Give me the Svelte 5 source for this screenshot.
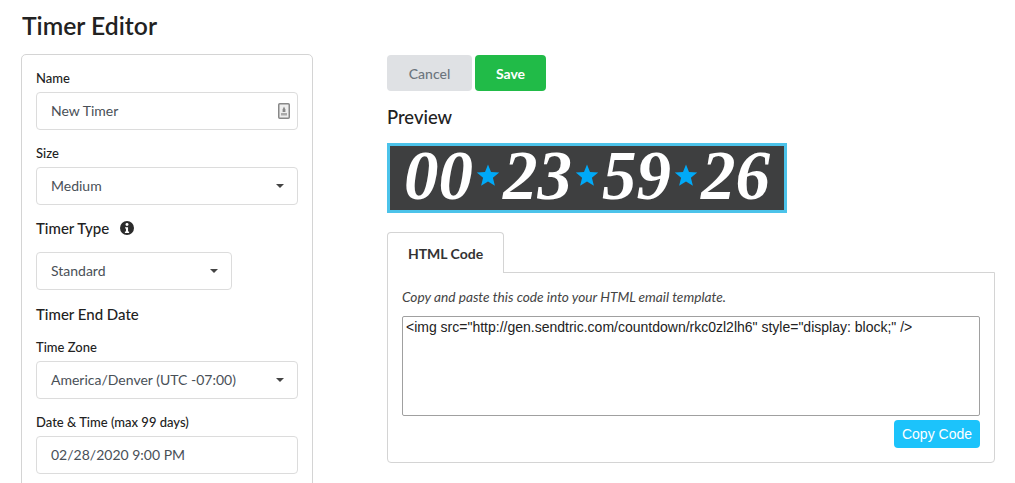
<script>
  const segments = ['00', '23', '59', '26'];
  const code = '<img src="http://gen.sendtric.com/countdown/rkc0zl2lh6" style="display: block;" />';
</script>

<div class="page">
  <div class="left">
    <h1>Timer Editor</h1>
    <div class="card">
      <div class="label first">Name</div>
      <div class="field">
        <span>New Timer</span>
        <svg class="contact" width="12" height="16" viewBox="0 0 12 16">
          <rect x="0.75" y="0.75" width="10.5" height="14.5" rx="1" fill="#eee" stroke="#888" stroke-width="1.5" />
          <path d="M6 3.500l1.400 3v2.500H4.600V6.500z" fill="#888" />
          <rect x="3" y="10" width="6" height="2.500" fill="#aaa" />
        </svg>
      </div>

      <div class="label">Size</div>
      <div class="field"><span>Medium</span><i class="caret"></i></div>

      <div class="heading type">
        Timer Type
        <svg width="14" height="14" viewBox="0 0 16 16">
          <circle cx="8" cy="8" r="8" fill="#2b2b2b" />
          <circle cx="8" cy="4" r="1.700" fill="#fff" />
          <path d="M5.800 7h3.400v5h1.200v1.600H5.600V12h1.200V8.600h-1z" fill="#fff" />
        </svg>
      </div>
      <div class="field short"><span>Standard</span><i class="caret"></i></div>

      <div class="heading end">Timer End Date</div>

      <div class="label zone">Time Zone</div>
      <div class="field"><span>America/Denver (UTC -07:00)</span><i class="caret"></i></div>

      <div class="label">Date &amp; Time (max 99 days)</div>
      <div class="field"><span>02/28/2020 9:00 PM</span></div>
    </div>
  </div>

  <div class="right">
    <div class="actions">
      <button class="cancel">Cancel</button>
      <button class="save">Save</button>
    </div>
    <h2>Preview</h2>
    <div class="timer">
      {#each segments as seg, i}
        {#if i > 0}
          <svg class="star" width="24" height="24" viewBox="0 0 24 24">
            <path d="M12 1.500l3 7.600 8.200.5-6.300 5.200 2 8-6.900-4.400-6.900 4.400 2-8L.8 9.600 9 9.100z" fill="#00a9f7" />
          </svg>
        {/if}
        <span class="digits">{seg}</span>
      {/each}
    </div>

    <div class="tab">HTML Code</div>
    <div class="panel">
      <p>Copy and paste this code into your HTML email template.</p>
      <div class="code">{code}</div>
      <div class="copy-row">
        <button class="copy">Copy Code</button>
      </div>
    </div>
  </div>
</div>

<style>
  :global(body) {
    background: #fff;
    overflow: hidden;
  }

  .page {
    display: flex;
    height: 483px;
    overflow: hidden;
    padding-left: 21px;
    box-sizing: border-box;
    font-family: Lato, "Liberation Sans", sans-serif;
    color: #212529;
  }

  .left {
    width: 292px;
    flex: none;
  }

  h1 {
    margin: 0;
    height: 54px;
    padding: 11px 0 0 1px;
    box-sizing: border-box;
    font-size: 24.700px;
    line-height: 30px;
    font-weight: 600;
    color: #222;
  }

  .card {
    border: 1px solid #d4d4d4;
    border-radius: 5px;
    padding: 14px 14px 30px;
    height: 460px;
    box-sizing: border-box;
  }

  .label {
    font-size: 13px;
    line-height: 16px;
    font-weight: 500;
    margin: 15px 0 6px;
    color: #222;
  }

  .label.first {
    margin-top: 1px;
  }

  .label.zone {
    margin-top: 16px;
  }

  .heading {
    font-size: 15px;
    line-height: 18px;
    font-weight: 500;
    color: #222;
    display: flex;
    align-items: center;
    gap: 11px;
  }

  .heading.type {
    margin: 14px 0 15px;
  }

  .heading.end {
    margin-top: 15px;
  }

  .field {
    height: 38px;
    box-sizing: border-box;
    border: 1px solid #dcdcdc;
    border-radius: 4px;
    padding: 0 14px 2px;
    display: flex;
    align-items: center;
    justify-content: space-between;
    font-size: 14px;
    color: #495057;
  }

  .field.short {
    width: 196px;
  }

  .contact {
    margin: 2px -7px 0 0;
  }

  .caret {
    width: 0;
    height: 0;
    border-left: 4px solid transparent;
    border-right: 4px solid transparent;
    border-top: 4px solid #444;
    margin: 2px -1px 0 0;
  }

  .right {
    margin-left: 74px;
    width: 608px;
    flex: none;
    padding-top: 55px;
  }

  .actions {
    display: flex;
    gap: 3px;
  }

  button {
    border: 0;
    border-radius: 4px;
    font-family: inherit;
    padding: 0;
  }

  .cancel {
    width: 85px;
    height: 36px;
    background: #dfe1e4;
    color: #6c757d;
    font-size: 14px;
    font-weight: 500;
  }

  .save {
    width: 71px;
    height: 36px;
    background: #21bb48;
    color: #fff;
    font-size: 14px;
    font-weight: 700;
  }

  h2 {
    margin: 15px 0 0;
    font-size: 18.400px;
    line-height: 22px;
    font-weight: 500;
    color: #222;
  }

  .timer {
    margin-top: 15px;
    width: 400px;
    height: 70px;
    box-sizing: border-box;
    border: 3px solid #4cc3ea;
    background: #3e3f40;
    display: flex;
    align-items: center;
    justify-content: center;
    gap: 3px;
    color: #fff;
  }

  .digits {
    font-family: "Liberation Serif", serif;
    font-style: italic;
    font-weight: 700;
    font-size: 69px;
    line-height: 64px;
    margin-bottom: 4px;
  }

  .star {
    flex: none;
    margin-bottom: 7px;
  }

  .tab {
    margin-top: 19px;
    width: 117px;
    height: 41px;
    box-sizing: border-box;
    border: 1px solid #d4d4d4;
    border-bottom: 0;
    border-radius: 4px 4px 0 0;
    background: #fff;
    font-size: 14px;
    font-weight: 700;
    color: #333;
    text-align: center;
    line-height: 41px;
    position: relative;
    z-index: 1;
    margin-bottom: -1px;
  }

  .panel {
    height: 191px;
    box-sizing: border-box;
    border: 1px solid #d4d4d4;
    border-radius: 0 0 4px 4px;
    padding: 0 14px;
  }

  .panel p {
    margin: 15px 0 11px;
    font-size: 13.700px;
    line-height: 17px;
    font-style: italic;
    color: #444;
  }

  .code {
    height: 100px;
    box-sizing: border-box;
    border: 1px solid #a0a0a0;
    border-radius: 2px;
    padding: 3px 3px;
    font-family: "Liberation Sans", sans-serif;
    font-size: 14px;
    line-height: 15px;
    color: #222;
  }

  .copy-row {
    display: flex;
    justify-content: flex-end;
    margin-top: 4px;
  }

  .copy {
    width: 86px;
    height: 28px;
    background: #1cc3fb;
    color: #fff;
    font-family: "Liberation Sans", sans-serif;
    font-size: 14px;
  }
</style>
